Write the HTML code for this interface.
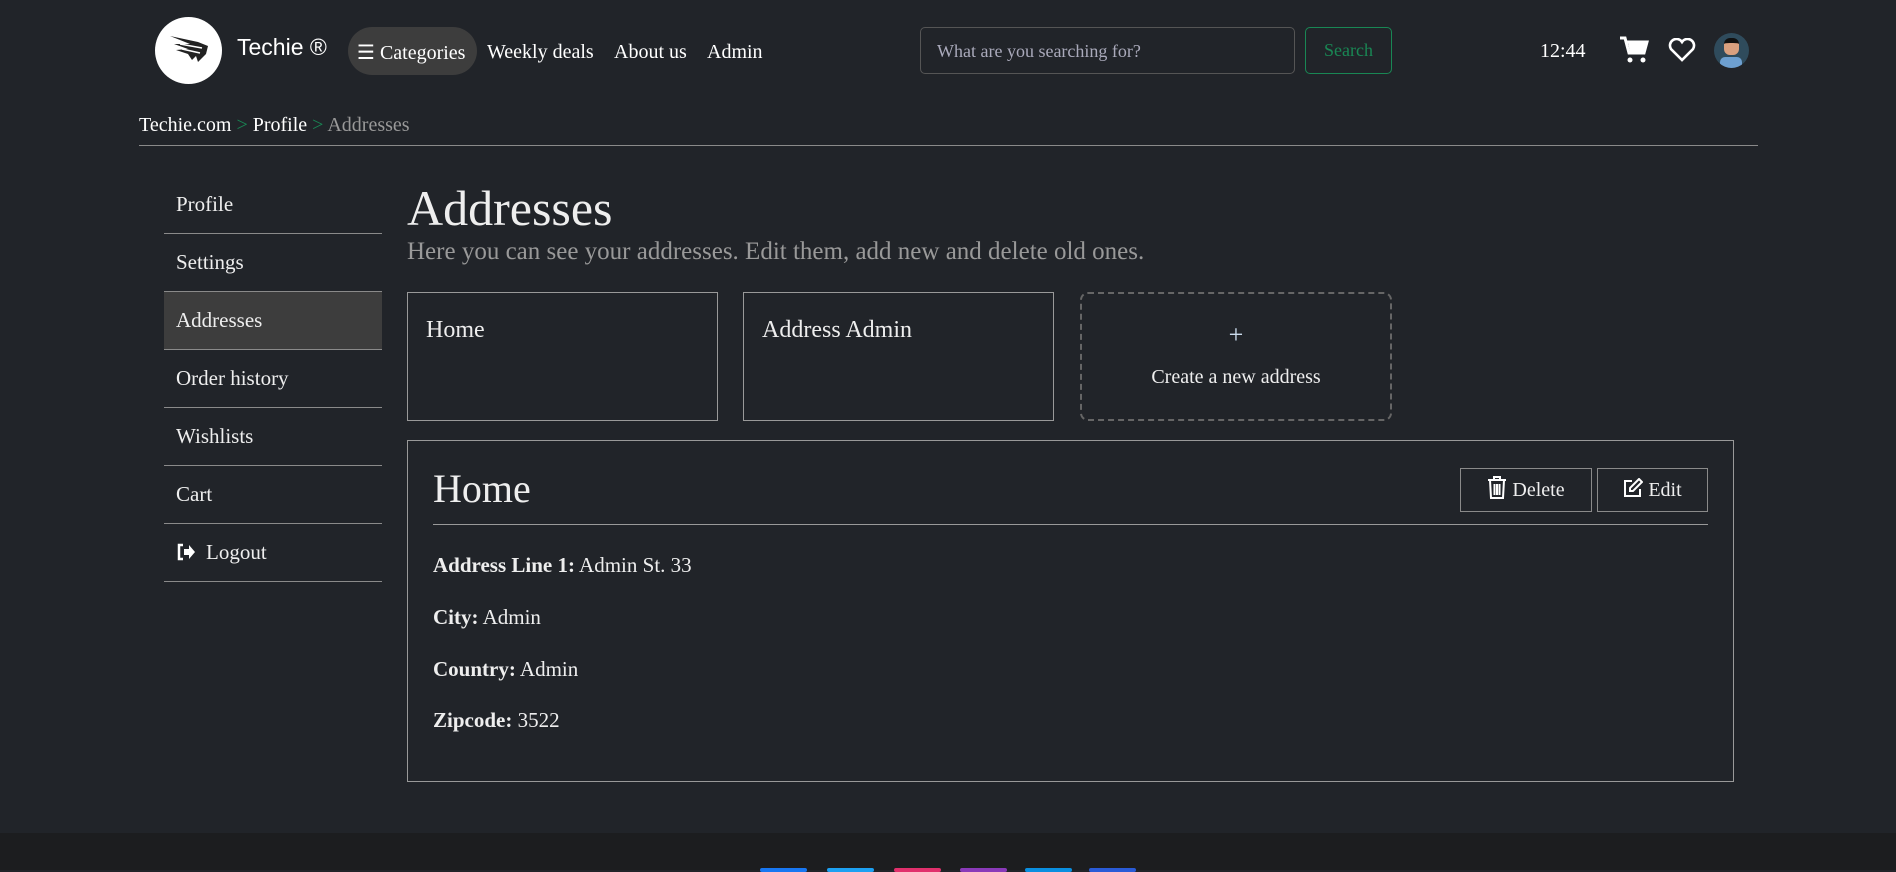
<!DOCTYPE html>
<html><head><meta charset="utf-8"><style>
*{margin:0;padding:0;box-sizing:border-box}
body{width:1896px;height:870px;overflow:hidden;background:#212429;color:#fff;font-family:"Liberation Serif",serif;position:relative}
.a{position:absolute}
.nav{font-size:20px;top:40px}
.side{left:164px;width:218px}
.side div{height:58px;border-bottom:1px solid #8a8a8a;padding-left:12px;line-height:57px;font-size:21px;color:#eee}
.card{border:1px solid #999;top:292px;height:129px;width:311px;padding:24px 18px;font-size:24px;color:#eee}
.btn{border:1px solid #8a8a8a;height:44px;top:468px;font-size:20px;line-height:42px;text-align:center;color:#eee}
.row{left:433px;font-size:21px;color:#eee}
</style></head><body>
<div class="a" style="left:155px;top:17px;width:67px;height:67px;border-radius:50%;background:#fff"></div>
<svg class="a" style="left:168px;top:32px" width="44" height="36" viewBox="0 0 44 36"><path d="M2 4 L30 10 L40 14 L38 22 L30 30 L28 24 L24 28 L20 22 L8 18 L20 17 L6 12 L22 12 Z" fill="#222"/><path d="M12 12 L34 16 M14 17 L32 21" stroke="#fff" stroke-width="1.5"/></svg>
<div class="a" style="left:237px;top:34px;font-family:'Liberation Sans',sans-serif;font-size:23px">Techie ®</div>
<div class="a" style="left:348px;top:27px;width:129px;height:48px;border-radius:24px;background:#3d3d3d"></div>
<div class="a nav" style="left:357px;top:40px"><span style="font-family:'DejaVu Sans';font-weight:bold">☰</span> Categories</div>
<div class="a nav" style="left:487px;top:41px">Weekly deals</div>
<div class="a nav" style="left:614px;top:41px">About us</div>
<div class="a nav" style="left:707px;top:41px">Admin</div>
<div class="a" style="left:920px;top:27px;width:375px;height:47px;border:1px solid #555;border-radius:5px;padding:13px 16px;font-size:18px;color:#aab">What are you searching for?</div>
<div class="a" style="left:1305px;top:27px;width:87px;height:47px;border:1px solid #198754;border-radius:5px;text-align:center;line-height:45px;font-size:18px;color:#198754">Search</div>
<div class="a" style="left:1540px;top:40px;font-size:20px">12:44</div>
<svg class="a" style="left:1619px;top:36px" width="30" height="28" viewBox="0 0 30 28"><path d="M1 2h5l4 15h15l3-11H8" fill="none" stroke="#fff" stroke-width="3"/><path d="M9 7h18l-3 9H11z" fill="#fff"/><circle cx="11" cy="24" r="2.5" fill="#fff"/><circle cx="24" cy="24" r="2.5" fill="#fff"/></svg>
<svg class="a" style="left:1668px;top:38px" width="28" height="24" viewBox="0 0 28 24"><path d="M14 22 L3 11 A6 6 0 0 1 14 4 A6 6 0 0 1 25 11 Z" fill="none" stroke="#fff" stroke-width="2.6"/></svg>
<div class="a" style="left:1714px;top:33px;width:35px;height:35px;border-radius:50%;background:#2f4b5c;overflow:hidden"><div class="a" style="left:10px;top:5px;width:15px;height:17px;border-radius:6px;background:#d9a07f;border-top:5px solid #111"></div><div class="a" style="left:6px;top:24px;width:22px;height:14px;background:#6d9fd0;border-radius:5px"></div></div>
<div class="a" style="left:139px;top:114px;font-size:20px">Techie.com <span style="color:#198754">&gt;</span> Profile <span style="color:#198754">&gt;</span> <span style="color:#999">Addresses</span></div>
<div class="a" style="left:139px;top:145px;width:1619px;height:1px;background:#8a8a8a"></div>
<div class="a side" style="top:176px">
<div>Profile</div><div>Settings</div><div style="background:#3d3d3d">Addresses</div><div>Order history</div><div>Wishlists</div><div>Cart</div><div><svg width="20" height="18" viewBox="0 0 20 18" style="vertical-align:-2px;margin-right:10px"><path d="M7 2H3v14h4" fill="none" stroke="#fff" stroke-width="2.5"/><path d="M8 6h5V2l6 7-6 7v-4H8z" fill="#fff"/></svg>Logout</div>
</div>
<div class="a" style="left:407px;top:179px;font-size:50px;color:#eee">Addresses</div>
<div class="a" style="left:407px;top:238px;font-size:25px;color:#999">Here you can see your addresses. Edit them, add new and delete old ones.</div>
<div class="a card" style="left:407px">Home</div>
<div class="a card" style="left:743px">Address Admin</div>
<div class="a" style="left:1080px;top:292px;width:312px;height:129px;border:2px dashed #666;border-radius:8px;text-align:center;color:#eee">
<div style="font-size:26px;margin-top:26px;color:#cde">+</div><div style="font-size:20px;margin-top:16px">Create a new address</div></div>
<div class="a" style="left:407px;top:440px;width:1327px;height:342px;border:1px solid #999"></div>
<div class="a" style="left:433px;top:465px;font-size:40px;color:#eee">Home</div>
<div class="a btn" style="left:1460px;width:132px"><svg width="20" height="24" viewBox="0 0 20 24" style="vertical-align:-4px"><path d="M1 4h18M7 4V1h6v3M3 4l1 18h12l1-18M7.5 8v11M10 8v11M12.5 8v11" fill="none" stroke="#fff" stroke-width="2"/></svg> Delete</div>
<div class="a btn" style="left:1597px;width:111px"><svg width="20" height="20" viewBox="0 0 20 20" style="vertical-align:-2px"><path d="M9 3H2v15h15v-7" fill="none" stroke="#fff" stroke-width="2"/><path d="M16 1l3 3-9 9H7v-3z" fill="none" stroke="#fff" stroke-width="2"/></svg> Edit</div>
<div class="a" style="left:433px;top:524px;width:1275px;height:1px;background:#999"></div>
<div class="a row" style="top:553px"><b>Address Line 1:</b> Admin St. 33</div>
<div class="a row" style="top:605px"><b>City:</b> Admin</div>
<div class="a row" style="top:657px"><b>Country:</b> Admin</div>
<div class="a row" style="top:708px"><b>Zipcode:</b> 3522</div>
<div class="a" style="left:0;top:833px;width:1896px;height:37px;background:#1c1d1f"></div>
<div class="a" style="left:760px;top:868px;width:47px;height:4px;border-radius:5px;background:#1877f2"></div>
<div class="a" style="left:827px;top:868px;width:47px;height:4px;border-radius:5px;background:#1da1f2"></div>
<div class="a" style="left:894px;top:868px;width:47px;height:4px;border-radius:5px;background:#e1306c"></div>
<div class="a" style="left:960px;top:868px;width:47px;height:4px;border-radius:5px;background:#8a3ab9"></div>
<div class="a" style="left:1025px;top:868px;width:47px;height:4px;border-radius:5px;background:#0a8fe0"></div>
<div class="a" style="left:1089px;top:868px;width:47px;height:4px;border-radius:5px;background:#2a5bd7"></div>
</body></html>
